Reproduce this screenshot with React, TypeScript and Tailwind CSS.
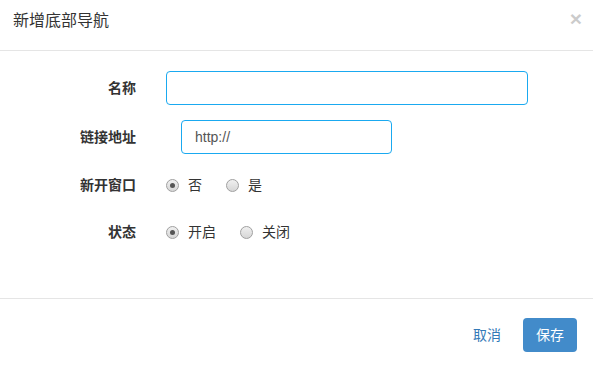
import { ReactNode } from "react";

const Radio = ({ checked, label }: { checked?: boolean; label: string }) => (
    <label className="flex items-center mr-6">
        <span className="w-[13px] h-[13px] rounded-full border border-[#a0a0a0] bg-gradient-to-b from-[#f0f0f0] to-[#d6d6d6] flex items-center justify-center">
            {checked && <span className="w-[5px] h-[5px] rounded-full bg-[#555]" />}
        </span>
        <span className="ml-[9px] text-[14px] text-[#333]">{label}</span>
    </label>
);

const Row = ({ label, children, className }: { label: string; children: ReactNode; className?: string }) => (
    <div className={`flex items-center h-[34px] ${className || ""}`}>
        <div className="w-[136px] text-right text-[14px] font-bold text-[#333]">{label}</div>
        <div className="ml-[30px] flex items-center flex-1">{children}</div>
    </div>
);

export default function App() {
    return (
        <div
            className="w-[593px] h-[370px] bg-white flex flex-col"
            style={{ fontFamily: '"Liberation Sans", "Noto Sans CJK SC", sans-serif' }}
        >
            <div className="h-[51px] border-b border-[#e5e5e5] flex items-start justify-between pl-[13px] pr-[11px] pt-[8px]">
                <h4 className="text-[16px] leading-[25px] text-[#333]">新增底部导航</h4>
                <button className="text-[21px] leading-[21px] font-bold text-black opacity-20">×</button>
            </div>
            <div className="pt-[20px] pb-[49px] flex flex-col">
                <Row label="名称">
                    <input className="w-[362px] h-[34px] border border-[#1aa9f0] rounded-[4px] outline-none px-3 text-[14px]" />
                </Row>
                <Row label="链接地址" className="mt-[15px]">
                    <input
                        defaultValue="http://"
                        className="ml-[15px] w-[211px] h-[34px] border border-[#1aa9f0] rounded-[4px] outline-none pl-[13px] text-[14px] text-[#555]"
                    />
                </Row>
                <Row label="新开窗口" className="mt-[14px]">
                    <Radio checked label="否" />
                    <Radio label="是" />
                </Row>
                <Row label="状态" className="mt-[13px]">
                    <Radio checked label="开启" />
                    <Radio label="关闭" />
                </Row>
            </div>
            <div className="border-t border-[#e5e5e5] flex justify-end items-start pt-[19px] pr-[16px]">
                <button className="text-[14px] text-[#337ab7] h-[34px] px-3 mr-[10px]">取消</button>
                <button className="text-[14px] text-white bg-[#428bca] rounded-[4px] h-[34px] w-[54px]">保存</button>
            </div>
        </div>
    );
}
